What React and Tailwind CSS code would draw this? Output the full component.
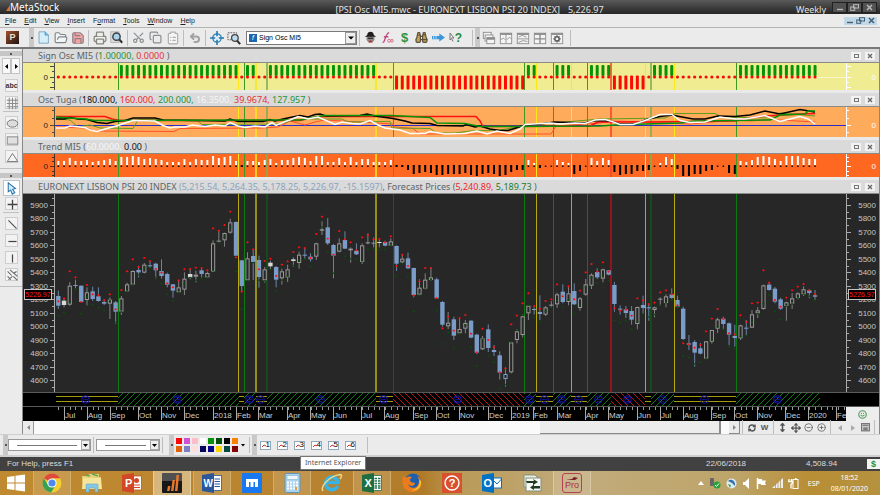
import React from "react";
import {
  FolderOpen, Save, Printer, Scissors, Copy, ClipboardList, Undo2, Binoculars,
  RefreshCw, Move, MoveVertical, CircleMinus, CirclePlus, Smile,
} from "lucide-react";

/* Weekly bars: [kind, high, bodyTop, bodyBottom, low, upper forecast, lower forecast], levels in thirds of a pixel */
const BARS = [
  ["b",302,318,347,357,334,376],["g",325,332,345,352,325,367],["h",276,287,344,347,244,335],["b",269,285,288,295,262,297],
  ["b",287,287,336,336,336,370],["h",292,307,330,346,285,320],["b",290,304,327,333,313,343],["b",292,319,333,335,316,352],
  ["b",328,336,341,345,331,361],["h",322,329,341,387,313,332],["b",333,337,365,402,358,397],["h",318,325,365,375,300,365],
  ["h",278,283,304,305,244,302],["h",241,243,284,286,208,283],["b",227,240,247,262,231,254],["h",219,224,248,250,204,232],
  ["b",213,226,229,234,213,233],["b",218,221,241,266,237,262],["b",208,243,258,266,248,280],["b",248,252,284,292,280,312],
  ["b",282,283,302,323,292,331],["h",272,292,307,309,271,306],["h",247,266,299,315,238,281],["g",236,252,262,268,237,262],
  ["h",242,254,260,277,233,270],["b",236,241,252,263,234,264],["h",245,249,262,264,241,260],["h",151,160,244,246,115,240],
  ["h",122,152,155,157,122,157],["h",128,129,151,170,105,140],["h",86,97,128,131,65,110],["b",94,96,197,198,202,244],
  ["b",210,211,288,305,305,357],["h",187,205,271,272,157,271],["b",180,198,216,270,178,217],["b",197,210,261,293,238,270],
  ["h",231,238,271,278,213,272],["g",212,218,229,240,206,238],["b",228,231,269,292,258,302],["h",236,244,265,284,224,270],
  ["h",224,238,262,276,214,258],["g",202,208,213,230,186,226],["h",185,194,219,236,172,212],["b",175,194,197,209,174,206],
  ["b",190,200,208,215,204,229],["h",158,160,200,210,132,185],["h",94,118,122,135,80,110],["b",84,112,160,165,146,184],
  ["b",162,165,197,265,194,249],["h",145,160,185,187,123,175],["b",124,150,176,177,148,198],["h",172,176,181,218,157,206],
  ["b",160,182,193,195,181,207],["h",160,166,216,222,142,212],["h",130,157,160,163,135,176],["b",142,158,161,172,148,178],
  ["g",150,156,158,172,147,178],["b",152,156,167,169,157,178],["h",145,154,167,168,139,165],["b",166,168,221,243,228,256],
  ["h",193,206,217,221,194,220],["b",188,205,235,237,228,260],["b",233,234,315,322,316,363],["h",268,293,314,316,274,315],
  ["h",250,269,296,298,234,293],["h",233,262,270,272,234,268],["b",263,268,325,327,324,361],["b",333,336,404,410,415,461],
  ["h",366,398,409,417,380,427],["b",380,388,437,450,422,472],["h",387,417,430,432,384,430],["h",390,399,416,430,375,404],
  ["b",391,392,443,445,431,471],["b",431,434,488,492,487,527],["h",438,445,478,480,416,447],["b",403,418,474,486,450,496],
  ["b",465,480,486,498,472,516],["b",484,496,548,569,547,595],["o",531,552,567,590,535,583],["h",455,457,547,550,403,455],
  ["h",417,424,450,460,377,420],["h",373,379,435,442,340,375],["h",345,347,370,390,310,345],["b",352,357,360,374,348,381],
  ["b",316,366,372,390,357,394],["h",348,352,374,378,333,364],["h",333,344,347,350,328,352],["h",308,313,343,354,283,330],
  ["b",283,305,336,340,319,350],["h",290,310,336,346,289,330],["b",280,303,343,345,328,370],["h",321,325,354,362,302,345],
  ["h",267,283,314,317,247,290],["h",250,254,287,297,222,262],["b",235,246,262,267,245,278],["h",236,238,266,277,217,258],
  ["b",240,241,254,256,245,271],["b",276,285,342,365,355,390],["b",346,356,359,374,362,397],["b",348,358,369,384,359,391],
  ["b",348,363,389,404,377,417],["h",350,351,402,418,325,395],["b",317,345,354,372,331,371],["b",341,352,355,392,342,380],
  ["h",350,352,360,382,338,373],["h",322,326,329,347,307,345],["h",313,319,339,352,301,336],["b",295,313,324,326,313,330],
  ["b",317,330,350,352,346,350],["b",350,356,447,450,460,498],["b",435,460,464,480,463,502],["b",450,456,488,530,473,521],
  ["b",459,475,491,493,465,516],["h",453,454,506,508,424,505],["h",420,420,455,461,386,450],["h",383,388,416,429,357,410],
  ["b",380,386,402,420,387,418],["b",397,400,434,465,430,468],["b",404,438,444,470,433,475],["h",404,406,445,450,376,440],
  ["b",390,413,416,435,396,436],["h",360,373,413,414,340,396],["h",351,361,370,384,338,370],["h",284,286,357,359,241,340],
  ["b",278,284,300,302,278,314],["b",291,296,335,340,330,364],["b",323,328,356,360,350,388],["h",335,337,348,392,323,347],
  ["h",309,325,341,357,301,341],["h",307,310,324,328,290,322],["h",289,298,313,318,282,312],["b",297,301,309,325,301,318],
  ["b",300,316,320,333,312,330],
];

const TREND = [
  4,4,7,4,4,5,3,4,5,6,4,8,8,9,8,6,7,6,5,3,3,3,6,3,6,5,5,9,7,8,9,4,-1,4,4,3,5,6,2,5,5,7,8,7,4,9,9,3,3,7,3,8,3,6,6,3,3,3,5,
  -1,-1,-4,-8,-7,-6,-7,-9,-9,-8,-8,-8,-7,-9,-10,-8,-7,-8,-10,-9,-6,-4,-4,5,2,-2,0,0,5,3,2,-8,-5,0,7,4,7,5,-6,-9,-8,-8,-5,-5,-4,
  0,2,8,6,-3,-10,-10,-8,-8,-5,-4,0,0,-7,-8,4,3,5,8,9,8,6,4,9,9,9,7,6,6,
];

/* Signal phases: [start, end, phase] — n neutral, u up, d down */
const PHASES = [
  [56,118,"n"],[118,239,"u"],[239,244,"n"],[244,256,"u"],[256,267,"n"],[267,376,"u"],[376,393,"n"],[393,524,"d"],[524,536,"u"],
  [536,553,"n"],[553,571,"u"],[571,587,"n"],[587,611,"u"],[611,645,"d"],[645,651,"n"],[651,674,"u"],[674,736,"n"],[736,820,"u"],
];
const MARKS = [85,177,249,260,320,383,457,529,544,561,578,598,627,662,704,777];

const SIGNALS = [
  [118,1,"u"],[238,1,"n"],[244,1,"u"],[255,2,"n"],[266,2,"w"],[375,2,"n"],[393,1,"d"],[524,1,"u"],[536,1,"n"],[553,1,"u"],
  [571,1,"n"],[587,1,"u"],[610,2,"d"],[645,1,"n"],[650,2,"w"],[674,1,"n"],[736,1,"u"],
];

const MONTHS = [
  [64,"Jul"],[87,"Aug"],[110,"Sep"],[138,"Oct"],[161,"Nov"],[184,"Dec"],[213,"2018"],[236,"Feb"],[258,"Mar"],[287,"Apr"],
  [310,"May"],[333,"Jun"],[361,"Jul"],[384,"Aug"],[413,"Sep"],[436,"Oct"],[459,"Nov"],[488,"Dec"],[511,"2019"],[533,"Feb"],
  [557,"Mar"],[585,"Apr"],[608,"May"],[637,"Jun"],[660,"Jul"],[683,"Aug"],[711,"Sep"],[734,"Oct"],[757,"Nov"],[785,"Dec"],
  [808,"2020"],[836,"Fe"],
];

const barX = (i) => 58.3 + i * 5.733;
const levelY = (l) => 190 + l / 3;
const phaseAt = (x) => (PHASES.find(([a, b]) => x >= a && x < b) || [0, 0, "n"])[2];

const UI = "font-['Liberation_Sans',Arial,sans-serif]";
const HEAD = "font-['Noto_Sans','Open_Sans',sans-serif]";

function Plot({ top, height, className, children }) {
  return (
    <svg viewBox={`55 ${top} 791 ${height}`} height={height} preserveAspectRatio="none" className={`block min-w-0 flex-1 ${className || ""}`} aria-hidden="true">
      {children}
    </svg>
  );
}

function SignalLines({ top, height, dark }) {
  const tone = dark
    ? { u: "#0b7a10", n: "#b5ab10", d: "#a51418", w: "#14521a" }
    : { u: "#3d9a22", n: "#fbe71c", d: "#f8452a", w: "#7fae55" };
  return SIGNALS.map(([x, w, t]) => <rect key={x} x={x} y={top} width={w} height={height} fill={tone[t]} opacity={w > 1 ? 0.8 : 1} />);
}

function Axis({ side, top, height, ticks, minor, labels, color, tag, text }) {
  const left = side === "left";
  const width = left ? 32 : 33;
  const line = left ? 31 : 0;
  return (
    <svg width={width} height={height} viewBox={`0 ${top} ${width} ${height}`} className={`block shrink-0 ${UI}`}>
      <rect x={line} y={top} width="1" height={height} fill={color} />
      {ticks.map((y) => <rect key={y} x={left ? 27 : 0} y={y} width="5" height="1" fill={color} />)}
      {minor.map((y) => <rect key={y} x={left ? 29 : 0} y={y} width="3" height="1" fill={color} />)}
      {labels.map(([y, t]) => (
        <text key={t} x={left ? 25 : 30} y={y + 3} fontSize="8" textAnchor="end" fill={text}>{t}</text>
      ))}
      {tag && (
        <g>
          <rect x={left ? 1.5 : 2.5} y="289.500" width="27" height="10" fill="#000" stroke="#c4c4c4" />
          <text x={left ? 15 : 16} y="297" fontSize="7" textAnchor="middle" fill="#ff1a1a">{tag}</text>
        </g>
      )}
    </svg>
  );
}

function PaneHeader({ children }) {
  return (
    <div className={`flex h-[14px] items-center border-b border-[#8a8a86] bg-[#dadada] pr-1 pl-[15px] text-[9px] leading-none whitespace-nowrap text-[#5b6368] ${HEAD}`}>
      <h2 className="flex-1">{children}</h2>
      <div className="flex gap-1">
        <button aria-label="Maximize pane" className="grid h-2 w-2.5 place-items-center bg-[#f2f2f2]"><span className="block h-1 w-[5px] border border-[#777]" /></button>
        <button aria-label="Close pane" className="grid h-2 w-2.5 place-items-center bg-[#f2f2f2]">
          <svg width="6" height="6" viewBox="0 0 6 6"><path d="M1 1L5 5M5 1L1 5" stroke="#666" strokeWidth="1.3" /></svg>
        </button>
      </div>
    </div>
  );
}

const Sep = () => <span className="mx-[2px] h-4 w-px shrink-0 bg-[#bdbdbd]" />;
const Grip = () => <span className="grid h-full w-[5px] shrink-0 place-items-center bg-[#c9c9c9]"><span className="h-[2px] w-[2px] bg-[#555]" /></span>;

function Tool({ label, children }) {
  return <button aria-label={label} title={label} className="grid h-4 w-[17px] shrink-0 place-items-center text-[#8a8f93]">{children}</button>;
}
function Draw({ size = 13, children }) {
  return <svg width={size} height={size} viewBox="0 0 16 16" fill="none">{children}</svg>;
}

function TitleBar() {
  return (
    <header className={`flex h-[14px] items-center bg-gradient-to-b from-[#5a5a5a] via-[#3f3f3f] to-[#262626] text-[9px] leading-none whitespace-nowrap text-[#e2e2e2] ${HEAD}`}>
      <div className="flex flex-1 items-center pl-[6px] text-[10px] text-white">
        <svg width="4" height="8" viewBox="0 0 4 8"><path d="M0 8L4 2V8Z" fill="#d9742b" /></svg>MetaStock
      </div>
      <div className="flex gap-2 pt-1 pl-14">
        <h1>[PSI Osc MI5.mwc - EURONEXT LISBON PSI 20 INDEX]</h1><span>5,226.97</span>
      </div>
      <div className="flex flex-1 items-center justify-end pr-[3px]">
        <span className="pt-1 pr-[6px]">Weekly</span>
        <WinButtons box="h-[11px] w-[15px] border border-[#222] bg-[#525252]" ink="#b9b9b9" />
      </div>
    </header>
  );
}

function WinButtons({ box, ink }) {
  return (
    <div className="flex">
      <button aria-label="Minimize" className={`grid place-items-center ${box}`}><svg width="8" height="7" viewBox="0 0 8 7"><path d="M1 5.500H7" stroke={ink} strokeWidth="1.4" /></svg></button>
      <button aria-label="Restore" className={`grid place-items-center ${box}`}><svg width="9" height="7" viewBox="0 0 9 7" fill="none" stroke={ink}><rect x="3.500" y=".7" width="5" height="3.300" /><rect x=".7" y="3" width="4" height="3.300" /></svg></button>
      <button aria-label="Close" className={`grid place-items-center ${box}`}><svg width="7" height="7" viewBox="0 0 7 7"><path d="M1 1L6 6M6 1L1 6" stroke={ink} strokeWidth="1.5" /></svg></button>
    </div>
  );
}

function MenuBar() {
  const items = [["", "F", "ile"], ["", "E", "dit"], ["", "V", "iew"], ["", "I", "nsert"], ["F", "o", "rmat"], ["", "T", "ools"], ["", "W", "indow"], ["", "H", "elp"]];
  return (
    <nav className={`flex h-[14px] items-center border-b border-[#b4b4b4] bg-[#ebebeb] pr-[3px] pl-[5px] text-[7px] leading-none text-[#222] ${UI}`}>
      <ul className="flex flex-1 gap-2">
        {items.map(([a, b, c]) => <li key={a + b + c}><button>{a}<u>{b}</u>{c}</button></li>)}
      </ul>
      <WinButtons box="h-[8px] w-[11px] bg-[#c3d8e6]" ink="#3f5f78" />
    </nav>
  );
}

function Tile({ kind }) {
  return (
    <Draw size={14}>
      {kind === "cascade" ? (
        <g stroke="#8b8b8b" fill="#f4f4f4"><rect x="1.500" y="1.500" width="9" height="7" /><rect x="3.500" y="4.500" width="9" height="7" /><rect x="5.500" y="7.500" width="9" height="7" /><path d="M5.500 9H14.500" strokeWidth="2" /></g>
      ) : (
        <g stroke="#8b8b8b" fill="#f4f4f4">
          <rect x="1.500" y="2.500" width="13" height="12" /><path d="M1.500 3.500H14.500" strokeWidth="2" />
          {kind === "v" && <path d="M8 3V14M2 10L5 8L7 10M9 10L12 7L14 9" />}
          {kind === "h" && <path d="M2 9H14M3 7L7 5L12 7M3 13L8 11L13 12" />}
          {kind === "q" && <path d="M2 9H14M8 3V14" strokeWidth="1.600" />}
          {kind === "gear" && <g stroke="#555"><circle cx="8" cy="9" r="2.500" strokeWidth="1.700" /><path d="M8 4.500V6M8 12V13.500M3.500 9H5M11 9H12.500M5 6L6 7M10 11L11 12M11 6L10 7M6 11L5 12" /></g>}
        </g>
      )}
    </Draw>
  );
}

function Toolbar() {
  return (
    <div className={`flex h-[21px] items-center border-b-2 border-[#777] bg-[#ebebeb] ${UI}`}>
      <button aria-label="Power console" className="mr-[6px] ml-[6px] grid h-[13px] w-[13px] shrink-0 place-items-center bg-gradient-to-br from-[#a8532a] to-[#1d1310] text-[9px] font-bold text-[#e6dcd2]">P</button>
      <span className="w-1 shrink-0" />
      <Grip />
      <span className="w-px shrink-0" />
      <Tool label="New"><Draw><path d="M2.500 1H10L14 5V15H2.500Z" fill="#d6edfa" stroke="#6c9cba" /><path d="M10 1V5H14" fill="#6cc0ee" stroke="#3a92c6" /></Draw></Tool>
      <Tool label="Open"><FolderOpen size={14} strokeWidth={2} color="#7e858a" fill="#f4f4f4" /></Tool>
      <Tool label="Save"><Save size={14} strokeWidth={2} color="#8e7f86" fill="#f2a3a3" /></Tool>
      <Sep />
      <Tool label="Print"><Printer size={14} strokeWidth={2.2} color="#84877f" fill="#eee" /></Tool>
      <Tool label="Preview"><Draw><rect x="1" y="1" width="10" height="13" fill="#ddd" stroke="#aaa" /><circle cx="8" cy="7" r="4.500" fill="#a7d3ea" stroke="#3a4044" strokeWidth="1.800" /><path d="M11.500 10.500L15 14.500" stroke="#333" strokeWidth="2.500" /></Draw></Tool>
      <Sep />
      <Tool label="Cut"><Scissors size={13} strokeWidth={2.2} className="-rotate-90" /></Tool>
      <Tool label="Copy"><Copy size={13} strokeWidth={2.2} /></Tool>
      <Tool label="Paste"><ClipboardList size={14} strokeWidth={2} color="#adadad" fill="#f4f4f4" /></Tool>
      <Sep />
      <Tool label="Undo"><Undo2 size={12} strokeWidth={4} color="#a2a2a2" /></Tool>
      <Sep />
      <Tool label="Crosshair"><Draw size={14}><circle cx="8" cy="8" r="4.800" stroke="#2f82b8" strokeWidth="1.500" fill="#e1f1fa" /><path d="M8 0V6M8 10V16M0 8H6M10 8H16" stroke="#2678ae" strokeWidth="1.800" /></Draw></Tool>
      <Tool label="Zoom box"><Draw size={14}><rect x="1" y="2" width="10" height="8" stroke="#555" strokeDasharray="2 1" /><circle cx="9" cy="8" r="3.800" fill="#bcdcf0" stroke="#444" strokeWidth="1.500" /><path d="M11.500 11L15 15" stroke="#333" strokeWidth="2.500" /></Draw></Tool>
      <div className="relative ml-1 h-[14px] w-[111px] shrink-0">
        <select aria-label="Indicator" className="block h-full w-full appearance-none border border-[#7a7a7a] bg-white pl-[12px] text-[7px] leading-[12px] text-black">
          <option>Sign Osc MI5</option>
        </select>
        <span className="pointer-events-none absolute top-[3px] left-[3px] grid h-[8px] w-[8px] place-items-center bg-[#1c67ad] text-[7px] leading-none text-white italic">f</span>
        <span className="pointer-events-none absolute top-px right-px grid h-3 w-[11px] place-items-center border border-[#999] bg-[#efefef]"><svg width="6" height="4" viewBox="0 0 6 4"><path d="M0 .5H6L3 3.500Z" fill="#000" /></svg></span>
      </div>
      <Sep />
      <Tool label="Expert advisor"><Draw><circle cx="8" cy="9" r="5" fill="#8d8581" /><path d="M1 7H15L12 5C12 2 10 1 8 1S4 2 4 5Z" fill="#1e1c1c" /><path d="M5 14L8 11L11 14Z" fill="#a33" /><path d="M5 9H11" stroke="#2a2a2a" strokeWidth="1.500" /></Draw></Tool>
      <Tool label="Indicator builder"><Draw><path d="M2 14C5 15 5 3 10 2M3.500 7H9" stroke="#c04a80" strokeWidth="1.700" /><circle cx="10" cy="12" r="1.800" stroke="#d45a72" /><circle cx="13.500" cy="12" r="1.600" stroke="#d45a72" /></Draw></Tool>
      <Tool label="System tester"><span className="text-[13px] leading-none font-bold text-[#2c9447]">$</span></Tool>
      <Tool label="Explorer"><Binoculars size={13} strokeWidth={2.2} color="#5a5344" fill="#c9a24f" /></Tool>
      <Tool label="Forecaster"><Draw><path d="M0 6H9V3L16 8L9 13V10H0Z" fill="#3b97d8" /><path d="M2 5.500V10.500M5 5.500V10.500" stroke="#cfe6f6" /></Draw></Tool>
      <Tool label="Context help"><span className="flex items-center"><svg width="6" height="9" viewBox="0 0 6 9"><path d="M1 0V7L2.500 5.500L4 8.500M1 0L5 5H2.500" stroke="#777" fill="none" /></svg><span className="text-[12px] leading-none font-bold text-[#1f8c46]">?</span></span></Tool>
      <span className="w-[6px] shrink-0" />
      <Sep />
      <Grip />
      <Tool label="Cascade"><Tile kind="cascade" /></Tool>
      <Tool label="Tile columns"><Tile kind="v" /></Tool>
      <Tool label="Tile rows"><Tile kind="h" /></Tool>
      <Tool label="Tile grid"><Tile kind="q" /></Tool>
      <Tool label="Tile options"><Tile kind="gear" /></Tool>
      <span className="w-[3px] shrink-0" />
      <Sep />
    </div>
  );
}

const SIDE_A = [
  ["Text", <span key="t" className="text-[7px] font-bold text-[#333]">abc</span>],
  ["Grid", <Draw key="g"><path d="M4 1V15M8 1V15M12 1V15M1 4H15M1 8H15M1 12H15" stroke="#888" strokeWidth="1.200" /></Draw>],
];
const SIDE_B = [
  ["Ellipse", <Draw key="e"><ellipse cx="8" cy="8" rx="6.500" ry="4.500" stroke="#777" fill="#dcdcdc" strokeWidth="1.200" /></Draw>],
  ["Rectangle", <Draw key="r"><rect x="1.500" y="3.500" width="13" height="9" stroke="#888" fill="#e0e0e0" strokeWidth="1.200" /></Draw>],
  ["Triangle", <Draw key="t"><path d="M8 3L14.500 13H1.500Z" stroke="#777" fill="#f4f4f4" strokeWidth="1.200" /></Draw>],
];
const SIDE_C = [
  ["Trendline", <Draw key="d"><path d="M3 3L13 13" stroke="#555" strokeWidth="1.500" /></Draw>],
  ["Horizontal line", <Draw key="h"><path d="M3 8H13" stroke="#444" strokeWidth="1.500" /></Draw>],
  ["Vertical line", <Draw key="v"><path d="M8 3V13" stroke="#444" strokeWidth="1.500" /></Draw>],
  ["Channel", <Draw key="c"><path d="M2 3L7 8M9 9L14 14M5 1L14 9M3 13L8 9M10 5L13 3M2 9L6 13" stroke="#666" strokeWidth="1.300" /></Draw>],
];
function SideButton({ label, children }) {
  return <button aria-label={label} className="grid h-[13px] w-[13px] place-items-center border border-[#cdcdcd] bg-[#f3f3f3] leading-none">{children}</button>;
}
function SideGrip() {
  return <span className="grid h-[5px] w-full place-items-center bg-[#c6c6c6]"><span className="h-[2px] w-[2px] bg-[#555]" /></span>;
}

function SideBar() {
  return (
    <aside className={`flex w-[22px] shrink-0 flex-col items-center bg-[#ebebeb] pt-[2px] ${UI}`}>
      <SideGrip />
      <div className="mt-[2px] flex">
        <button aria-label="Previous" className="grid h-4 w-[9px] place-items-center border border-[#c4c4c4] bg-[#f8f8f8]"><svg width="4" height="5" viewBox="0 0 4 5"><path d="M3 0V5L0 2.500Z" /></svg></button>
        <button aria-label="Next" className="grid h-4 w-[9px] place-items-center border border-[#c4c4c4] bg-[#f8f8f8]"><svg width="4" height="5" viewBox="0 0 4 5"><path d="M1 0V5L4 2.500Z" /></svg></button>
      </div>
      <div className="mt-[5px] flex flex-col gap-[4px]">{SIDE_A.map(([l, i]) => <SideButton key={l} label={l}>{i}</SideButton>)}</div>
      <span className="mt-[2px] h-px w-4 bg-[#c0c0c0]" />
      <div className="mt-[4px] flex flex-col gap-[4px]">{SIDE_B.map(([l, i]) => <SideButton key={l} label={l}>{i}</SideButton>)}</div>
      <span className="mt-[5px] mb-[4px] h-px w-full bg-[#c0c0c0]" />
      <SideGrip />
      <button aria-label="Select" className="mt-[2px] grid h-[16px] w-[17px] place-items-center border border-[#b9c3cb] bg-white"><Draw><path d="M4 1V12L7 10L9 15L12 13L9.500 9L13 8Z" fill="#d3ecfb" stroke="#2b75ad" strokeWidth="1.300" /></Draw></button>
      <div className="mt-px"><SideButton label="Cross"><Draw><path d="M8 2V14M2 8H14" stroke="#444" strokeWidth="1.600" /></Draw></SideButton></div>
      <span className="mt-[2px] h-px w-4 bg-[#c0c0c0]" />
      <div className="mt-[4px] flex flex-col gap-[4px]">{SIDE_C.map(([l, i]) => <SideButton key={l} label={l}>{i}</SideButton>)}</div>
      <span className="mt-[5px] h-px w-full bg-[#c0c0c0]" />
    </aside>
  );
}

const Gap = () => <div className="h-[3px] bg-[#e9e9e9]" />;

function SignPane() {
  const ax = { top: 63, height: 27, ticks: [66, 77, 87], minor: [71, 82], labels: [[77, "0"]] };
  return (
    <section>
      <PaneHeader>Sign Osc MI5 (<span className="text-[#27933b]">1.00000,</span> <span className="text-[#e6323b]">0.0000</span> )</PaneHeader>
      <div className="flex bg-[#f0ec92]">
        <Axis side="left" {...ax} color="#4a4a40" text="#222" />
        <Plot top={63} height={27}>
          <rect x="815" y="77" width="31" height="1" fill="#f8f6c8" />
          <SignalLines top={63} height={27} />
          {BARS.map((_, i) => {
            const x = barX(i);
            const p = phaseAt(x);
            return (
              <g key={i}>
                {p === "u" && <rect x={x - 1.5} y="65" width="3" height="11" rx="1" fill="#069406" />}
                {p === "d" && <rect x={x - 1.5} y="75.500" width="3" height="14" rx="1" fill="#fb0a0a" />}
                {p !== "d" && <circle cx={x} cy="77" r="1.600" fill="#f20d0d" />}
              </g>
            );
          })}
        </Plot>
        <Axis side="right" {...ax} color="#fff" text="#fff" />
      </div>
    </section>
  );
}

const OSC = [
  ["#2c2cc8", 1, "55,125.500 846,125.500"],
  ["#ff5030", 1, "56,127 87,128 95,131 174,131.500 180,128.500 262,128 278,127 290,121 305,125 315,122 325,120 393,124 395,127 413,128.500 420,134 551,134 556,126 600,123 612,121 645,122 690,124 735,120 750,121 770,119.500 815,122"],
  ["#5f9f20", 1, "56,118.500 70,120 78,127 90,125 100,128 133,128.500 138,120 198,121 202,124.500 280,124 290,121 310,119 342,119 348,122 390,121.500 392,128 430,128.500 437,133 455,133 470,131 500,130 530,125 600,119 665,118 675,113.500 715,113.500 722,117 770,118 780,113 815,116"],
  ["#fb1212", 2, "56,116.500 105,116.500 112,119 120,120.500 300,120.500 310,118 325,116.500 476,116.500 480,121 483,126.500 590,126 598,122 645,122 735,121 750,118 765,116 800,114 815,113.500"],
  ["#000", 2, "56,119 64,119 70,117.500 78,119 87,119.500 97,122.500 107,123.500 115,121.500 125,120.500 133,118 155,118 163,120 200,120.500 225,121 230,119 238,121.500 263,121.500 270,119.500 275,121 283,119 290,117.500 300,115.500 308,117 315,114.500 320,114 326,116 360,115.500 367,114 375,116 393,118.500 405,121 412,123 430,123.500 437,125.500 463,126 466,124.500 475,127 480,126 490,129 500,130.500 508,130.500 516,128 525,125 540,124 555,122 570,122.500 585,123 593,121 600,120.500 610,121 620,124 635,124 648,119 660,116.500 672,115 682,117 693,119 705,119 718,116 735,116.500 750,115 765,111 780,114 800,109.500 815,112"],
  ["#089208", 2, "56,117 70,118 85,119 95,120.500 300,120 315,117 325,115.500 391,115.500 430,117.500 437,123 465,123.500 480,126.500 600,126 615,125 645,124 680,123 695,121 735,120.500 770,120 780,115 805,114 808,111 815,111"],
  ["#fff", 2, "56,128 65,128 70,126 85,127.500 90,130 97,131.500 105,129 118,125.500 125,123 133,120.500 155,121 163,125.500 170,128 175,127 185,127 192,125 205,126.500 215,125 225,126 230,122.500 238,126 245,127.500 255,126 265,127 272,122.500 276,125.500 285,121.500 290,120 298,116.500 308,119 318,117 325,120 335,124.500 342,122 352,123.500 360,124 370,120.500 378,125 385,128 400,130 410,133.500 425,133.500 430,131.500 445,134 465,133.500 477,131 487,134 497,131 510,133.500 520,129 525,124.500 550,123 560,124 575,123 585,123.500 595,120 605,119.500 612,121.500 620,124.500 633,124.500 645,120.500 660,114.500 672,114.500 680,120.500 690,122.500 705,122 720,117 735,119 745,119 765,115.500 780,121.500 800,116.500 808,119 815,124"],
];

function OscPane() {
  const ax = { top: 107, height: 30, ticks: [125], minor: [110, 118, 132], labels: [[125, "0"]] };
  return (
    <section>
      <PaneHeader>
        Osc Tuga (<span className="text-[#111]">180.000,</span> <span className="text-[#f0262d]">160.000,</span> <span className="text-[#27933b]">200.000,</span>{" "}
        <span className="text-[#f6f6f6]">16.3500,</span> <span className="text-[#e6323b]">39.9674,</span> <span className="text-[#27933b]">127.957</span> )
      </PaneHeader>
      <div className="flex bg-[#ffab5c]">
        <Axis side="left" {...ax} color="#4a4a40" text="#222" />
        <Plot top={107} height={30}>
          <SignalLines top={107} height={30} />
          {OSC.map(([c, w, p]) => <polyline key={c} points={p} fill="none" stroke={c} strokeWidth={w === 2 ? 1.5 : 1} />)}
        </Plot>
        <Axis side="right" {...ax} color="#fff" text="#fff" />
      </div>
    </section>
  );
}

function TrendPane() {
  const ax = { top: 154, height: 23, ticks: [166], minor: [157, 161, 171, 175], labels: [[166, "0"]] };
  return (
    <section>
      <PaneHeader>Trend MI5 (<span className="text-[#f6f6f6]">60.0000,</span> <span className="text-[#111]">0.00</span> )</PaneHeader>
      <div className="flex bg-[#ff6820]">
        <Axis side="left" {...ax} color="#4a3020" text="#222" />
        <Plot top={154} height={23}>
          <SignalLines top={154} height={23} />
          {TREND.map((v, i) => {
            const x = barX(i);
            return (
              <g key={i}>
                <rect x={x - 0.8} y="165.500" width="1.600" height="1.500" fill="#111" />
                {v > 0 && <rect x={x - 1} y={165 - v} width="2" height={v} fill="#fff" />}
                {v < 0 && <rect x={x - 1} y="165" width="2" height={-v + 1} fill="#000" />}
              </g>
            );
          })}
        </Plot>
        <Axis side="right" {...ax} color="#fff" text="#fff" />
      </div>
    </section>
  );
}

function Candle({ bar, x }) {
  const [kind, hi, top, bot, lo, up, dn] = bar;
  const y1 = levelY(top);
  const h = Math.max(levelY(bot) - y1, 1);
  const ink = kind === "b" || kind === "o" ? "#7b9cc6" : "#989898";
  const hollow = kind === "h" || kind === "o";
  return (
    <g>
      <rect x={x - 0.5} y={levelY(hi)} width="1" height={(lo - hi) / 3} fill={ink} opacity=".8" />
      {hollow && h > 2
        ? <rect x={x - 1.6} y={y1 + 0.5} width="3.200" height={h - 1} fill="#272727" stroke={ink} />
        : <rect x={x - 2.2} y={y1} width="4.400" height={h} fill={kind === "g" ? "#d8d8d8" : ink} />}
      <path d={`M${x - 1.2} ${levelY(up)}H${x + 1.2}M${x} ${levelY(up) - 1}V${levelY(up) + 1}`} stroke="#ff1010" />
      <rect x={x - 1} y={levelY(dn) - 0.5} width="2" height="1.500" fill="#0a4f0c" />
    </g>
  );
}

function PricePane() {
  const prices = Array.from({ length: 14 }, (_, i) => 5900 - i * 100);
  const ticks = prices.map((_, i) => Math.round(205 + i * 13.49));
  const labels = prices.map((p, i) => [ticks[i], String(p)]);
  const minor = prices.map((_, i) => ticks[i] + 7).concat([198]);
  const ax = { top: 194, height: 198, ticks, minor, labels, tag: "5226.97" };
  return (
    <section>
      <PaneHeader>
        EURONEXT LISBON PSI 20 INDEX <span className="text-[#8ba4c0]">(5,215.54, 5,264.35, 5,178.25, 5,226.97, -15.1597)</span>, Forecast Prices (
        <span className="text-[#f0262d]">5,240.89,</span> <span className="text-[#1d7a2c]">5,189.73</span> )
      </PaneHeader>
      <div className="flex border-b border-[#5a5a5a] bg-[#272727]">
        <Axis side="left" {...ax} color="#aaa" text="#c4c4c4" />
        <Plot top={194} height={198}>
          <SignalLines top={194} height={198} dark />
          {BARS.map((b, i) => <Candle key={i} bar={b} x={barX(i)} />)}
        </Plot>
        <Axis side="right" {...ax} color="#aaa" text="#c4c4c4" />
      </div>
      <div className="flex border-b border-[#5a5a5a] bg-black">
        <div className="w-8 shrink-0" />
        <Plot top={393} height={13}>
          <defs>
            <pattern id="up" width="6" height="6" patternUnits="userSpaceOnUse"><path d="M-1 7L7 -1M-1 1L1 -1M5 7L7 5" stroke="#0d7a14" /></pattern>
            <pattern id="down" width="6" height="6" patternUnits="userSpaceOnUse"><path d="M-1 -1L7 7M5 -1L7 1M-1 5L1 7" stroke="#b01616" /></pattern>
          </defs>
          {PHASES.map(([a, b, p]) => p === "n"
            ? <path key={a} d={`M${a} 396.500H${b}M${a} 401.500H${b}`} stroke="#a39a10" />
            : <rect key={a} x={a} y="393" width={b - a} height="13" fill={p === "u" ? "url(#up)" : "url(#down)"} />)}
          {MARKS.map((x) => <g key={x} stroke="#1818b8" fill="none"><circle cx={x + 0.5} cy="399.500" r="3.800" /><path d={`M${x - 2} 399.500H${x + 3}M${x - 1} 397.500H${x + 2}M${x - 1} 401.500H${x + 2}`} opacity=".7" /></g>)}
        </Plot>
        <div className="w-[33px] shrink-0" />
      </div>
      <div className={`flex bg-black ${UI}`}>
        <div className="w-8 shrink-0" />
        <Plot top={407} height={14}>
          {BARS.concat(Array(5).fill(0)).map((_, i) => <rect key={i} x={Math.round(barX(i))} y="407" width="1" height="3" fill="#999" />)}
          {MONTHS.map(([x, m]) => (
            <g key={x}>
              <rect x={x} y="407" width="1" height="13" fill="#aaa" />
              <text x={x + 1} y="418" fontSize="8" fill="#cfcfcf">{m}</text>
            </g>
          ))}
        </Plot>
        <div className="grid w-[33px] shrink-0 place-items-center bg-[#ededed]"><Smile size={9} strokeWidth={3} color="#4f9a55" /></div>
      </div>
    </section>
  );
}

function ScrollRow() {
  const b = "grid h-[13px] w-[13px] place-items-center text-[#555]";
  return (
    <div className={`flex h-[13px] items-center bg-[#ebebeb] ${UI}`}>
      <button aria-label="Scroll left" className="grid h-full w-[11px] place-items-center border-r border-[#999]"><svg width="3" height="5" viewBox="0 0 3 5"><path d="M3 0V5L0 2.500Z" fill="#888" /></svg></button>
      <div className="flex h-full flex-1 bg-[#fafafa]">
        <div className="flex-[508]" /><div className="flex-[180] border-r-2 border-b border-[#8a8a8a] bg-[#ececec]" /><div className="flex-[8]" />
      </div>
      <button aria-label="Scroll right" className="grid h-full w-[11px] place-items-center border-r border-b border-[#888]"><svg width="3" height="5" viewBox="0 0 3 5"><path d="M0 0V5L3 2.500Z" fill="#888" /></svg></button>
      <div className="flex w-[139px] shrink-0 items-center">
        <Sep />
        <button aria-label="Reload" className={b}><RefreshCw size={8} strokeWidth={4} /></button>
        <button aria-label="Weekly periodicity" className={`${b} text-[8px] font-bold`}>W</button>
        <Sep />
        <button aria-label="Scale" className={b}><MoveVertical size={9} strokeWidth={4} /></button>
        <button aria-label="Move" className={b}><Move size={10} strokeWidth={3} /></button>
        <button aria-label="Zoom out" className={b}><CircleMinus size={9} strokeWidth={2} /></button>
        <button aria-label="Zoom in" className={b}><CirclePlus size={9} strokeWidth={2} /></button>
        <Sep />
        <button aria-label="Back" className={b}><svg width="4" height="6" viewBox="0 0 4 6"><path d="M4 0V6L0 3Z" fill="#aaa" /></svg></button>
        <button aria-label="Forward" className={b}><svg width="4" height="6" viewBox="0 0 4 6"><path d="M0 0V6L4 3Z" fill="#aaa" /></svg></button>
        <button aria-label="Data window" className={b}><Draw size={9}><rect x="1" y="1" width="14" height="13" fill="#ccc" stroke="#777" strokeWidth="2" /><path d="M4 9H12M4 12H12M3 4H13" stroke="#666" strokeWidth="2" /></Draw></button>
        <Sep />
      </div>
    </div>
  );
}

function LineSelect({ label, width }) {
  return (
    <div className={`relative h-3 shrink-0 ${width}`}>
      <select aria-label={label} className="block h-full w-full appearance-none border border-[#999] bg-white"><option></option></select>
      <span className="pointer-events-none absolute top-[6px] right-[14px] left-[9px] h-px bg-[#777]" />
      <span className="pointer-events-none absolute top-px right-px grid h-2.5 w-[9px] place-items-center border border-[#aaa] bg-[#efefef]"><svg width="5" height="3" viewBox="0 0 5 3"><path d="M0 0H5L2.500 3Z" /></svg></span>
    </div>
  );
}

const COLORS = [
  ["Red", "bg-[#f80808]"], ["Magenta", "bg-[#cf52d2]"], ["Pink", "bg-[#ffbcc8]"], ["White", "bg-white"], ["Green", "bg-[#06920a]"], ["Dark green", "bg-[#045008]"], ["Black", "bg-black"], ["Orange", "bg-[#fb8200]"],
  ["Rust", "bg-[#e06206]"], ["Periwinkle", "bg-[#7f80c4]"], ["Rose", "bg-[#ffdede]"], ["Navy", "bg-[#04045c]"], ["Blue", "bg-[#04048c]"], ["Yellow", "bg-[#fbd600]"], ["Teal", "bg-[#044a42]"], ["Maroon", "bg-[#840404]"],
];

function FormatBar() {
  return (
    <div className={`flex h-[23px] items-center border-t border-b-2 border-[#cfcfcf] bg-[#ebebeb] pl-[3px] ${UI}`}>
      <Grip /><LineSelect label="Line style" width="w-[83px]" /><Sep /><LineSelect label="Line weight" width="w-[64px]" /><Sep />
      <span className="w-[4px]" /><Grip /><span className="w-[2px]" />
      <div className="grid shrink-0 grid-cols-8 gap-[2px]">
        {COLORS.map(([n, c]) => <button key={n} aria-label={n} className={`h-[6px] w-[6px] ${c}`} />)}
      </div>
      <button aria-label="More colors" className="grid w-[9px] place-items-center"><svg width="4" height="3" viewBox="0 0 4 3"><path d="M0 0H4L2 2.500Z" /></svg></button>
      <Sep /><Grip />
      {[1, 2, 3, 4, 5, 6].map((n) => (
        <button key={n} aria-label={`Template ${n}`} className="mr-[3px] ml-[3px] flex h-[9px] w-[11px] shrink-0 items-center justify-end border border-[#8fa9ba] bg-white text-[8px] leading-none text-black">
          <svg width="4" height="5" viewBox="0 0 4 5"><path d="M0 4L2 2L4 3" stroke="#c33" fill="none" /></svg>{n}
        </button>
      ))}
      <span className="w-[6px]" /><Sep />
    </div>
  );
}

function StatusBar() {
  return (
    <footer className={`flex h-[14px] items-center bg-[#414141] pl-[7px] text-[8px] leading-none text-[#dcdcdc] ${UI}`}>
      <span className="flex-1">For Help, press F1</span>
      <span className="w-[100px]">22/06/2018</span>
      <span className="w-[61px]">4,508.94</span>
      <button aria-label="Account" className="grid h-[10px] w-[13px] place-items-center bg-[#f3f3f3] text-[9px] leading-none font-bold text-[#1b9436]">$</button>
    </footer>
  );
}

const LOGOS = {
  Chrome: (
    <svg width="20" height="20" viewBox="0 0 20 20"><circle cx="10" cy="10" r="9.500" fill="#f5ce32" /><path d="M10 10L1.800 5.200A9.500 9.500 0 0 1 18.200 5.200H10Z" fill="#de4a3c" /><path d="M1.800 5.200A9.500 9.500 0 0 0 9 19.500L13.500 12.500L10 10L6 12Z" fill="#35a156" /><circle cx="10" cy="10" r="4.600" fill="#fff" /><circle cx="10" cy="10" r="3.600" fill="#4c8bf0" /></svg>
  ),
  "File Explorer": (
    <svg width="22" height="20" viewBox="0 0 22 20"><path d="M1 3H7L8 1H18V4H20V16H2Z" fill="#e8d077" /><path d="M2 5H20L21 16H1Z" fill="#f5e59b" /><path d="M4 2L9 3M11 1L17 3" stroke="#5da85f" strokeWidth="1.500" /><path d="M5 19V12Q5 11 6 11H16Q17 11 17 12V19H14V15H8V19Z" fill="#85c8e6" stroke="#5fa7cc" strokeWidth=".6" /></svg>
  ),
  PowerPoint: (
    <svg width="20" height="20" viewBox="0 0 20 20"><rect x="9" y="3" width="10.500" height="14" fill="#fff" stroke="#d24726" strokeWidth=".8" /><circle cx="14.500" cy="7.500" r="2.500" fill="#d24726" /><path d="M12 12H18M12 14.500H18" stroke="#d24726" /><path d="M0 2L12 0V20L0 18Z" fill="#d24726" /><text x="3" y="14" fontSize="11" fontWeight="bold" fill="#fff">P</text></svg>
  ),
  MetaStock: (
    <svg width="20" height="20" viewBox="0 0 20 20"><rect width="20" height="20" rx="1" fill="#17171a" /><rect y="0" width="20" height="8" fill="#77777a" opacity=".6" /><path d="M5 18L6 13H8.500L7.500 18ZM9 18L10.500 7H13L11.500 18ZM13 18L14.500 2H17L15.500 18Z" fill="#e8772b" /></svg>
  ),
  Word: (
    <svg width="20" height="20" viewBox="0 0 20 20"><rect x="9" y="2.500" width="10.500" height="15" fill="#fff" stroke="#2b579a" strokeWidth=".8" /><path d="M12.500 6H18M12.500 8.500H18M12.500 11H18M12.500 13.500H18" stroke="#2b579a" /><path d="M0 2L12 0V20L0 18Z" fill="#2b579a" /><text x="1.500" y="14" fontSize="10" fontWeight="bold" fill="#fff">W</text></svg>
  ),
  Maxthon: (
    <svg width="20" height="20" viewBox="0 0 20 20"><rect width="20" height="20" rx="1" fill="#1778f2" /><path d="M4 14V6H16V14H13V9H11.500V14H8.500V9H7V14Z" fill="#fff" /></svg>
  ),
  Calculator: (
    <svg width="17" height="20" viewBox="0 0 17 20"><rect x="1" y=".5" width="15" height="19" rx="1.500" fill="#a9d3ee" stroke="#5f94b8" /><rect x="3" y="2.500" width="11" height="4" fill="#eef7fc" stroke="#7aa9c6" strokeWidth=".5" /><path d="M3 9.500H14M3 12.500H14M3 15.500H14" stroke="#fff" strokeWidth="2" strokeDasharray="2 1" /><path d="M12 14V17" stroke="#e89c3a" strokeWidth="2" /></svg>
  ),
  "Internet Explorer": (
    <svg width="22" height="20" viewBox="0 0 22 20"><path d="M16.500 13A6.200 6.200 0 1 1 17 9.500H6" fill="none" stroke="#36b4e8" strokeWidth="3.600" /><path d="M2 18C-1 14 8 3 19 1.500C21.500 1.500 20.500 4 19 6" fill="none" stroke="#e9d98a" strokeWidth="1.500" /></svg>
  ),
  Excel: (
    <svg width="20" height="20" viewBox="0 0 20 20"><rect x="9" y="2.500" width="10.500" height="15" fill="#fff" stroke="#217346" strokeWidth=".8" /><path d="M12.500 5.500H18.500M12.500 8H18.500M12.500 10.500H18.500M12.500 13H18.500M12.500 15H18.500" stroke="#217346" strokeWidth="1.300" strokeDasharray="2.500 1" /><path d="M0 2L12 0V20L0 18Z" fill="#1e6e42" /><text x="2.500" y="14" fontSize="11" fontWeight="bold" fill="#fff">X</text></svg>
  ),
  Firefox: (
    <svg width="20" height="20" viewBox="0 0 20 20"><circle cx="11" cy="8.500" r="8" fill="#1d5fae" /><path d="M1 3L4 5C6 3 9 3 10 5C8 5 7 7 9 9C11 10 13 9 13 11C11 14 7 13 6 11C8 17 17 16 17 8C17 6 16 4 15 3C19 5 20 9 19 13C16 20 8 21 3 16C0 12 0 8 1 3Z" fill="#ec7b1c" /><path d="M17 7C19 12 14 17 9 17C15 19 20 14 19 8Z" fill="#f8c02d" /></svg>
  ),
  Help: (
    <svg width="20" height="20" viewBox="0 0 20 20"><rect width="20" height="20" fill="#d9502e" /><circle cx="10" cy="10" r="7" fill="none" stroke="#fff" strokeWidth="1.400" /><text x="10" y="14" fontSize="11" fontWeight="bold" textAnchor="middle" fill="#fff">?</text></svg>
  ),
  Outlook: (
    <svg width="20" height="20" viewBox="0 0 20 20"><rect x="10" y="5" width="9.500" height="10" fill="#fff" stroke="#0072c6" /><path d="M10 6L15 11L19.500 6" fill="none" stroke="#0072c6" /><path d="M0 2L12 0V20L0 18Z" fill="#0072c6" /><text x="1.500" y="14" fontSize="11" fontWeight="bold" fill="#fff">O</text></svg>
  ),
  Transfer: (
    <svg width="20" height="20" viewBox="0 0 20 20"><path d="M2 2H13L16 5V14H2Z" fill="#e9eee6" stroke="#82917d" /><rect x="4" y="5" width="15" height="13" fill="#f6f8f4" stroke="#82917d" /><path d="M4 8H12L11 6L16 9L11 12V10H5ZM18 13H12V11.500L8 14.500L12 17V15.500H18Z" fill="#1f3b22" /></svg>
  ),
};

const Tooltip = () => (
  <span role="tooltip" className={`absolute bottom-[25px] left-[-12px] z-10 border border-[#777] bg-white px-1 py-px text-[7px] leading-[10px] whitespace-nowrap text-[#555] ${HEAD}`}>Internet Explorer</span>
);

function TaskBar() {
  const open = new Set(["Chrome", "Word", "Calculator", "Excel"]);
  return (
    <div className={`flex h-6 items-center bg-[linear-gradient(90deg,#c08a30_0%,#b78230_40%,#b07a28_48%,#b99a58_52%,#c2ab7c_66%,#bda468_84%,#b88e34_92%,#b5923f_100%)] leading-none text-white ${UI}`}>
      <button aria-label="Start" className="grid h-full w-8 place-items-center"><svg width="18" height="18" viewBox="0 0 18 18"><path d="M0 3L7.500 2V8.500H0ZM8.500 1.800L18 .5V8.500H8.500ZM0 9.500H7.500V16L0 15ZM8.500 9.500H18V17.500L8.500 16.200Z" fill="#fff" /></svg></button>
      {Object.entries(LOGOS).map(([n, logo]) => (
        <div key={n} className="relative h-full w-10 shrink-0">
          <button aria-label={n} className={`mx-px grid h-full w-[38px] place-items-center ${n === "MetaStock" ? "border-x border-[#e4cfa0] bg-[#d6b67c]" : open.has(n) ? "border-x border-[#d0ae6c] bg-[#ffffff26]" : ""}`}>{logo}</button>
          {n === "Internet Explorer" && <Tooltip />}
        </div>
      ))}
      <button aria-label="Pro" className="mx-px grid h-full w-[38px] shrink-0 place-items-center border-x border-[#d9c9a4] bg-[#ffffff26]">
        <span className="flex h-5 w-5 flex-col items-center justify-end rounded-[3px] border border-[#b5424f] pb-[2px] text-[9px] leading-[9px] text-[#a8323f]">
          <svg width="12" height="4" viewBox="0 0 12 4"><path d="M0 3L6 2L8 0L12 1L9 3Z" fill="#7a1d27" /></svg>Pro
        </span>
      </button>
      <div className="flex flex-1 items-center justify-end gap-[5px] pr-[12px]">
        <svg width="6" height="4" viewBox="0 0 6 4"><path d="M0 4L3 0L6 4Z" fill="#fff" /></svg>
        <svg width="12" height="12" viewBox="0 0 12 12"><rect x="1" y="1" width="4" height="8" rx="1" fill="#666" /><circle cx="8" cy="8" r="3.500" fill="#27a23a" /><path d="M6 8L7.500 9.500L10 6.500" stroke="#fff" fill="none" /></svg>
        <svg width="11" height="11" viewBox="0 0 11 11"><circle cx="5.500" cy="5.500" r="5" fill="#dfeaf2" /><path d="M2 3C5 0 10 3 9 8L6 5Z" fill="#2e74ab" /><path d="M2 6L5 7L4 10Z" fill="#4d9a4a" /></svg>
        <svg width="9" height="11" viewBox="0 0 9 11"><path d="M1 4H3L7 0V11L3 7H1Z" fill="#fff" /></svg>
        <svg width="11" height="11" viewBox="0 0 11 11"><path d="M1.500 0V11" stroke="#fff" strokeWidth="1.500" /><path d="M2 1H6V2.500H10L9 5L10 7H5V6H2Z" fill="#fff" /></svg>
        <svg width="11" height="10" viewBox="0 0 11 10"><path d="M0 10L11 0V10Z" fill="#eee" /><path d="M3.500 6V10M6 4V10M8.500 2V10" stroke="#a88d55" strokeWidth=".7" /></svg>
        <svg width="11" height="11" viewBox="0 0 11 11"><rect x="5" y="1.500" width="5" height="9" fill="none" stroke="#fff" /><path d="M7 .5H8.500M1 1V3M3.500 1V3M0 3.500H4.500V5L3 6.500V10.500" stroke="#fff" fill="none" strokeWidth="1.300" /></svg>
        <span className={`ml-1 text-[7px] ${HEAD}`}>ESP</span>
        <time className={`ml-[6px] text-center text-[7px] leading-[11px] ${HEAD}`}>18:52<br />08/01/2020</time>
      </div>
    </div>
  );
}

export default function App() {
  return (
    <div className="flex min-h-screen w-full flex-col overflow-hidden bg-[#ebebeb]">
      <TitleBar />
      <MenuBar />
      <Toolbar />
      <div className="flex">
        <SideBar />
        <main className="min-w-0 flex-1 border-r border-l border-[#888]">
          <SignPane />
          <Gap />
          <OscPane />
          <Gap />
          <TrendPane />
          <Gap />
          <PricePane />
          <ScrollRow />
        </main>
      </div>
      <FormatBar />
      <StatusBar />
      <TaskBar />
    </div>
  );
}
